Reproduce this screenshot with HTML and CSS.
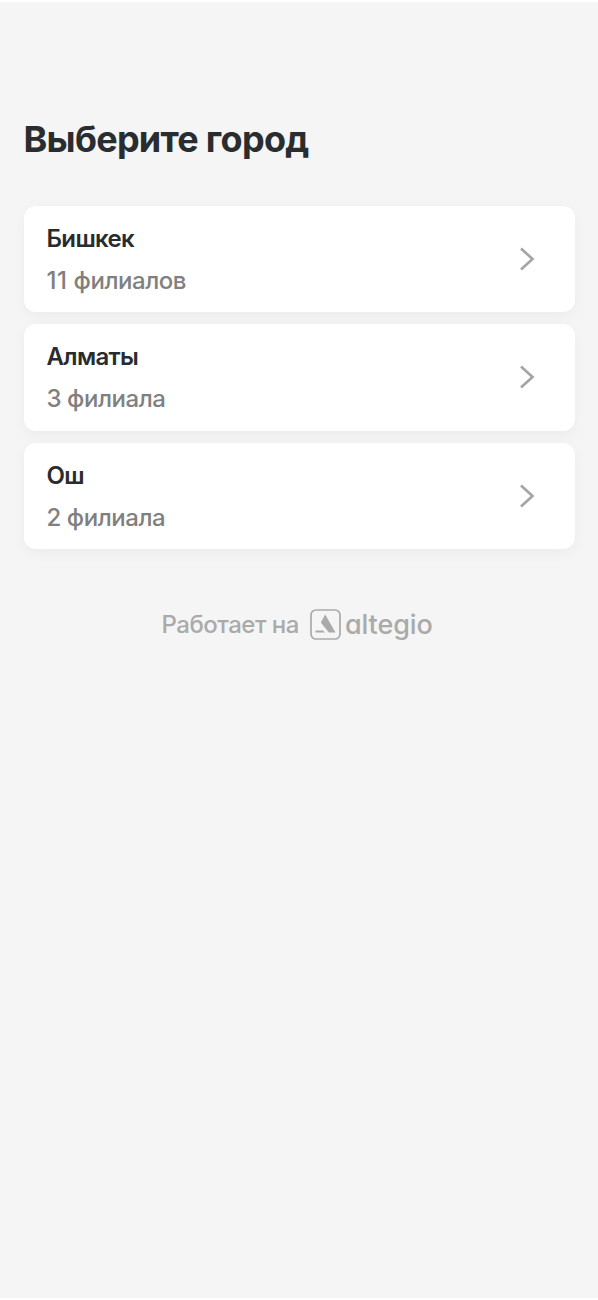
FILE: index.html
```html
<!DOCTYPE html>
<html lang="ru">
<head>
<meta charset="utf-8">
<title>Выберите город</title>
<link rel="stylesheet" href="styles.css">
</head>
<body>
<main class="page">
<h1 class="title">Выберите город</h1>
<div class="list">
<a class="card"><div><div class="city">Бишкек</div><div class="count"><span class="ones">11</span> филиалов</div></div><svg class="chevron" width="18" height="26" viewBox="0 0 18 26"><path d="M3 2.500 14.500 13 3 23.500"/></svg></a>
<a class="card"><div><div class="city">Алматы</div><div class="count">3 филиала</div></div><svg class="chevron" width="18" height="26" viewBox="0 0 18 26"><path d="M3 2.500 14.500 13 3 23.500"/></svg></a>
<a class="card"><div><div class="city">Ош</div><div class="count">2 филиала</div></div><svg class="chevron" width="18" height="26" viewBox="0 0 18 26"><path d="M3 2.500 14.500 13 3 23.500"/></svg></a>
</div>
<footer class="footer"><span class="powered">Работает на</span>
<svg class="mark" width="31" height="31" viewBox="0 0 31 31"><rect x="1" y="1" width="29" height="29" rx="5"/><path d="M15.200 5.500 25.500 23.500H18.800L10.800 13.500ZM5.500 21.500H13L15 23.500H5.500Z"/></svg>
<span class="brand">altegio</span></footer>
</main>
</body>
</html>
```

FILE: styles.css
```css
body { margin: 0; background: #f5f5f5; font-family: Inter, "Liberation Sans", sans-serif; }
.page { box-sizing: border-box; min-height: 1300px; padding: 117px 23.500px 0; border-top: 2px solid #fff; border-bottom: 2px solid #fff; }
.title { margin: 0; font-size: 36px; line-height: 40px; font-weight: 700; color: #292d30; letter-spacing: -0.720px; }
.list { display: flex; flex-direction: column; gap: 12px; margin-top: 46.500px; }
.card { display: flex; justify-content: space-between; align-items: center; box-sizing: border-box; height: 106.500px; padding: 0 39px 0 23px; border-radius: 12px; background: #fff; box-shadow: 0 4px 14px rgba(0,0,0,.045); }
.city { padding-top: 2px; font-size: 24px; line-height: 36px; font-weight: 600; color: #292c2e; letter-spacing: -0.650px; }
.count { margin-top: 6px; font-size: 24px; line-height: 36px; font-weight: 450; color: #808080; letter-spacing: -0.450px; }
.ones { letter-spacing: 0.600px; }
.chevron { fill: none; stroke: #a5a5a5; stroke-width: 2.700; }
.footer { display: flex; align-items: center; margin: 58px 0 0 138px; height: 34px; color: #aaa; font-size: 24px; }
.powered { font-weight: 500; letter-spacing: -0.500px; }
.mark { margin-left: 11px; fill: #aaa; }
.mark rect { fill: none; stroke: #aaa; stroke-width: 1.700; }
.brand { margin-left: 4px; font-size: 27px; font-weight: 500; letter-spacing: -0.100px; font-feature-settings: "cv11"; }
```
